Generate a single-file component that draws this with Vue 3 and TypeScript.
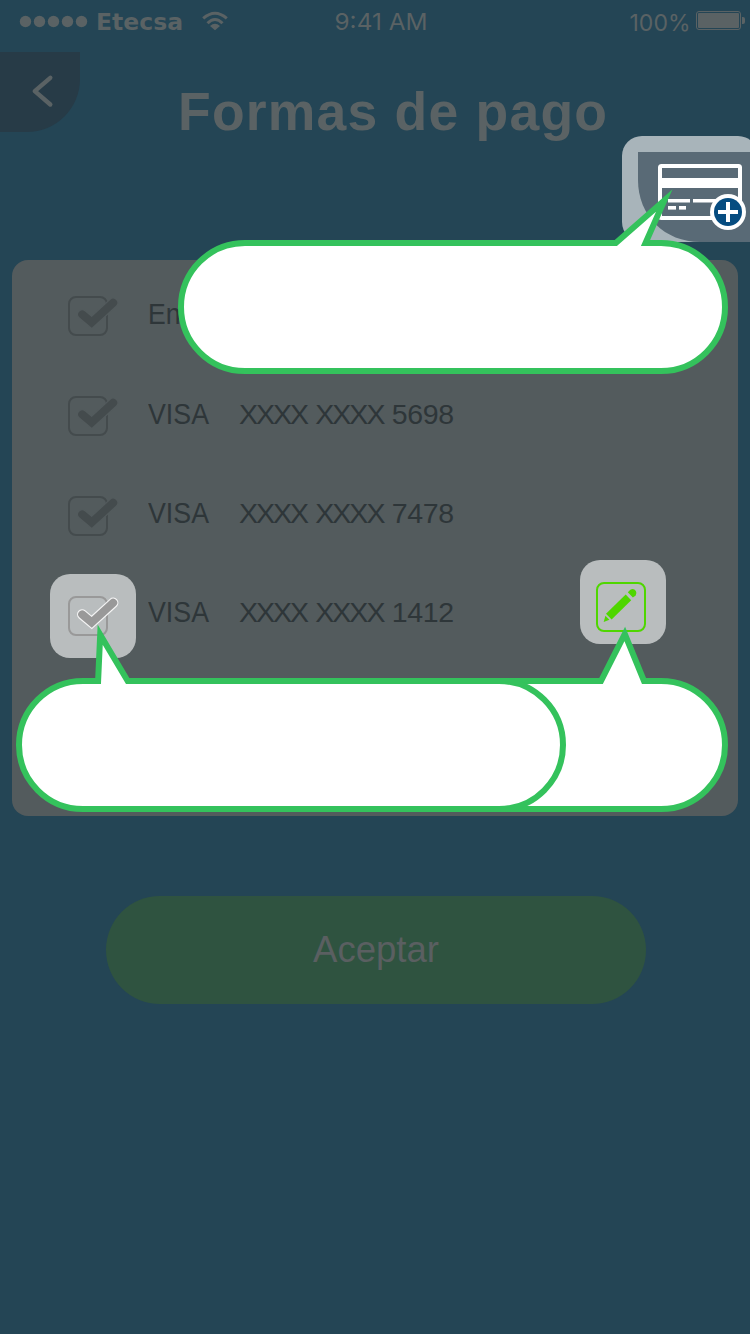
<script setup lang="ts">
interface PaymentRow {
  name: string
  nameWidth: number
  baseline: number
  mask?: string
  digits?: string
}

const rows: PaymentRow[] = [
  { name: 'En', nameWidth: 32.5, baseline: 58 },
  { name: 'VISA', nameWidth: 61, baseline: 58, mask: 'XXXX XXXX', digits: '5698' },
  { name: 'VISA', nameWidth: 61, baseline: 57, mask: 'XXXX XXXX', digits: '7478' },
  { name: 'VISA', nameWidth: 61, baseline: 56, mask: 'XXXX XXXX', digits: '1412' },
]

const dots = [25.5, 39.5, 53.5, 67.5, 81.5]
const tick = 'M14.2 18.4L23.7 26.4L45.2 6.8'
</script>

<template>
  <main class="screen">
    <svg class="status" width="750" height="44" viewBox="0 0 750 44">
      <circle v-for="x in dots" :key="x" :cx="x" cy="21.5" r="5.7" />
      <text class="carrier" x="96" y="30" textLength="87" lengthAdjust="spacingAndGlyphs">Etecsa</text>
      <g class="wifi">
        <path d="M203.2 18.4Q215 8.2 226.8 18.4" />
        <path d="M207.5 23.2Q215 15.6 222.5 23.2" />
        <path class="solid" d="M210 26Q215 21.4 220 26L215 30.2Z" />
      </g>
      <text class="info" x="334.5" y="30.4" textLength="93" lengthAdjust="spacingAndGlyphs">9:41 AM</text>
      <text class="info" x="629.5" y="31.2" textLength="61" lengthAdjust="spacingAndGlyphs">100%</text>
      <rect class="battery" x="696.5" y="11.5" width="44" height="18" rx="2.5" />
      <rect x="698" y="13" width="41" height="15" rx="1" />
      <path d="M742 17h1q2 0 2 2v3q0 2-2 2h-1z" />
    </svg>

    <header class="header">
      <button class="back" aria-label="Atrás">
        <svg width="80" height="80" viewBox="0 0 80 80"><path d="M50.3 25.8L34.8 39.2L50.3 52.5" /></svg>
      </button>
      <svg class="heading" width="450" height="100" viewBox="0 0 450 100">
        <text x="4" y="78" textLength="429" lengthAdjust="spacing">Formas de pago</text>
      </svg>
    </header>

    <section class="card">
      <div v-for="(row, i) in rows" :key="i" class="row">
        <svg class="check" width="54" height="42" viewBox="0 0 54 42">
          <rect x="1" y="1" width="38" height="38" rx="7" />
          <path class="halo" :d="tick" />
          <path class="tick" :d="tick" />
        </svg>
        <svg class="label" width="360" height="100" viewBox="0 0 360 100">
          <text x="0" :y="row.baseline" :textLength="row.nameWidth" lengthAdjust="spacingAndGlyphs">{{ row.name }}</text>
          <text v-if="row.mask" class="number" x="91" :y="row.baseline">{{ row.mask }}<tspan class="digits" x="243.8">{{ row.digits }}</tspan></text>
        </svg>
      </div>
    </section>

    <button class="accept">
      <svg width="540" height="108" viewBox="0 0 540 108">
        <text x="207" y="66" textLength="126" lengthAdjust="spacingAndGlyphs">Aceptar</text>
      </svg>
    </button>

    <svg class="guide" width="750" height="1334" viewBox="0 0 750 1334">
      <rect x="622" y="136" width="136" height="106" rx="20" fill="#a8b4ba" />
      <path d="M638 152H750V242H700C665 242 638 216 638 180Z" fill="#596a76" />
      <g fill="#fff">
        <rect x="660" y="166" width="80" height="52" rx="1.5" fill="none" stroke="#fff" stroke-width="4" />
        <rect x="660" y="178" width="80" height="10" />
        <rect x="668" y="199" width="22" height="3.5" />
        <rect x="693" y="199" width="24" height="3.5" />
        <rect x="668" y="206" width="8" height="3.6" />
        <rect x="679" y="206" width="7" height="3.6" />
        <circle cx="728" cy="212" r="18" />
        <circle cx="728" cy="212" r="14" fill="#064c80" />
        <path d="M718 212H738M728 202V222" stroke="#fff" stroke-width="4" />
      </g>

      <rect x="50" y="574" width="86" height="84" rx="20" fill="#b9bdbe" />
      <g class="active-check" transform="translate(68 596)">
        <rect x="1" y="1" width="38" height="38" rx="7" />
        <path class="halo" :d="tick" />
        <path class="tick" :d="tick" />
      </g>

      <rect x="580" y="560" width="86" height="84" rx="20" fill="#b9bdbe" />
      <rect x="597" y="583" width="48" height="48" rx="7" fill="none" stroke="#4fd600" stroke-width="2" />
      <g fill="#4fd600">
        <path d="M625.7 594.5L631.2 600.2L611.6 619.6L606 613.8Z" />
        <path d="M603.7 622L605.4 615.8L609.4 619.8Z" />
        <path d="M627.8 592.3L630.3 589.8Q632.4 588.2 634.4 589.4L635.9 591.1Q637 593.4 635.7 595.4L632.9 597.6Z" />
      </g>

      <g class="bubble">
        <path d="M245 243H615.8L664.3 200.5L645.5 243H661A64 64 0 0 1 661 371H245A64 64 0 0 1 245 243Z" />
        <path d="M245 681H601L624.8 634L644 681H661A64 64 0 0 1 661 809H245A64 64 0 0 1 245 681Z" />
        <path d="M83 681H98.1L100.2 634.7L127.7 681H499A64 64 0 0 1 499 809H83A64 64 0 0 1 83 681Z" />
      </g>
    </svg>
  </main>
</template>

<style>
body {
  margin: 0;
}
</style>

<style scoped>
.screen {
  position: relative;
  width: 750px;
  height: 1334px;
  overflow: hidden;
  background: #244555;
  font-family: "Liberation Sans", Arial, sans-serif;
}
svg {
  display: block;
}
button {
  padding: 0;
  border: 0;
}
.status {
  fill: #5a6264;
}
.carrier {
  font: bold 23.3px "DejaVu Sans", Verdana, sans-serif;
}
.info {
  font: 400 23.3px Inter, sans-serif;
}
.wifi {
  fill: none;
  stroke: #5a6264;
  stroke-width: 3;
}
.wifi .solid {
  fill: #5a6264;
  stroke: none;
}
.battery {
  fill: none;
  stroke: #5a6264;
}
.header {
  display: flex;
  box-sizing: border-box;
  height: 216px;
  padding-top: 8px;
  gap: 94px;
}
.back {
  width: 80px;
  height: 80px;
  border-radius: 0 0 53px 0;
  background: #273b47;
}
.back path {
  fill: none;
  stroke: #5a6264;
  stroke-width: 4.4;
  stroke-linecap: round;
  stroke-linejoin: round;
}
.heading {
  fill: #5a6264;
  font-size: 53.5px;
  font-weight: bold;
}
.card {
  box-sizing: border-box;
  width: 726px;
  height: 556px;
  margin-left: 12px;
  padding: 6px 0 0 56px;
  border-radius: 16px;
  background: #535b5d;
}
.row {
  display: flex;
  align-items: center;
  height: 100px;
  gap: 26px;
}
.check {
  position: relative;
  top: 1px;
}
.check rect,
.check path {
  fill: none;
  stroke: #444b4d;
  stroke-width: 2;
}
.check .halo,
.active-check .halo {
  stroke: #535b5d;
  stroke-width: 10.4;
  stroke-linecap: round;
}
.check .tick,
.active-check .tick {
  stroke-width: 8;
  stroke-linecap: round;
}
.label {
  fill: #2e3639;
  font-size: 29px;
}
.number {
  font-size: 28.5px;
  letter-spacing: -2px;
  word-spacing: 2.4px;
}
.digits {
  letter-spacing: -0.35px;
}
.accept {
  display: block;
  width: 540px;
  height: 108px;
  margin: 80px 0 0 106px;
  border-radius: 54px;
  background: #2f5340;
}
.accept text {
  fill: #5a5f61;
  font: 37.5px "Liberation Sans", Arial, sans-serif;
}
.guide {
  position: absolute;
  inset: 0;
}
.active-check rect,
.active-check path {
  fill: none;
  stroke: #999;
  stroke-width: 2;
}
.active-check .halo {
  stroke: #f4f4f4;
}
.bubble {
  fill: #fff;
  stroke: #34c25c;
  stroke-width: 6;
  stroke-miterlimit: 12;
}
</style>
